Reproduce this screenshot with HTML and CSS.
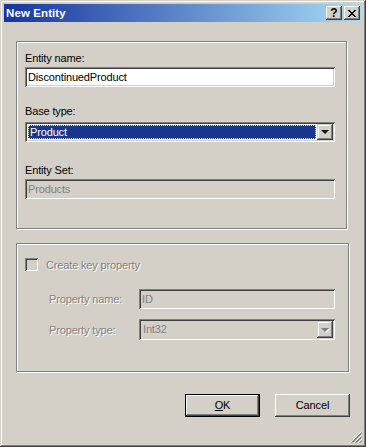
FILE: index.html
```html
<!DOCTYPE html>
<html lang="en">

<head>
    <meta charset="UTF-8">
    <title>New Entity</title>
    <link rel="stylesheet" href="styles.css">
</head>

<body>
    <div class="window">
        <div class="titlebar">
            <span class="title">New Entity</span>
            <div class="caption">
                <div class="cap-btn help">?</div>
                <div class="cap-btn">
                    <svg width="8" height="7" viewBox="0 0 8 7" shape-rendering="crispEdges">
                        <path d="M0 0h2v1h-2zM6 0h2v1h-2zM1 1h2v1h-2zM5 1h2v1h-2zM2 2h4v1h-4zM3 3h2v1h-2zM2 4h4v1h-4zM1 5h2v1h-2zM5 5h2v1h-2zM0 6h2v1h-2zM6 6h2v1h-2z" fill="#000"/>
                    </svg>
                </div>
            </div>
        </div>

        <div class="client">
            <div class="group group-entity">
                <div class="label">Entity name:</div>
                <div class="field field-name">DiscontinuedProduct</div>

                <div class="label label-base">Base type:</div>
                <div class="combo combo-base">
                    <div class="combo-value selected"><span>Product</span></div>
                    <div class="drop-btn"><i class="arrow"></i></div>
                </div>

                <div class="label label-set">Entity Set:</div>
                <div class="field field-set disabled">Products</div>
            </div>

            <div class="group group-key">
                <div class="check-row">
                    <div class="checkbox"></div>
                    <span class="dim">Create key property</span>
                </div>
                <div class="prop-row first">
                    <div class="prop-label dim">Property name:</div>
                    <div class="field prop-field disabled">ID</div>
                </div>
                <div class="prop-row">
                    <div class="prop-label dim">Property type:</div>
                    <div class="combo prop-field combo-type">
                        <div class="combo-value disabled">Int32</div>
                        <div class="drop-btn"><i class="arrow off"></i></div>
                    </div>
                </div>
            </div>

            <div class="actions">
                <div class="btn default"><u>O</u>K</div>
                <div class="btn">Cancel</div>
            </div>
        </div>

        <div class="grip">
            <svg width="12" height="12" viewBox="0 0 12 12">
                <path d="M11.5 0.5L0.5 11.5M11.5 4.5L4.5 11.5M11.5 8.5L8.5 11.5" stroke="#fff" stroke-width="1"/>
                <path d="M11.5 1.5L1.5 11.5M11.5 2.5L2.5 11.5M11.5 5.5L5.5 11.5M11.5 6.5L6.5 11.5M11.5 9.5L9.5 11.5M11.5 10.5L10.5 11.5" stroke="#808080" stroke-width="1"/>
            </svg>
        </div>
    </div>
</body>

</html>
```

FILE: styles.css
```css
* {
    padding: 0;
    margin: 0;
    box-sizing: border-box;
}

body {
    background: #d4d0c8;
    font-family: "Liberation Sans", Arial, sans-serif;
    font-size: 11px;
    letter-spacing: -0.15px;
    color: #000;
}

.window {
    position: relative;
    width: 366px;
    height: 447px;
    padding: 4px;
    background: #d4d0c8;
    box-shadow: inset -1px -1px #404040, inset 1px 1px #d4d0c8,
        inset -2px -2px #808080, inset 2px 2px #fff;
}

/* title bar */
.titlebar {
    display: flex;
    align-items: center;
    justify-content: space-between;
    height: 18px;
    padding: 0 2px;
    background: linear-gradient(to right, #15359e, #a8dcf6);
}

.title {
    color: #fff;
    font-weight: bold;
    font-size: 11.5px;
    letter-spacing: 0.1px;
    line-height: 18px;
}

.caption {
    display: flex;
    gap: 2px;
}

.cap-btn {
    display: flex;
    align-items: center;
    justify-content: center;
    width: 16px;
    height: 14px;
    background: #d4d0c8;
    box-shadow: inset -1px -1px #404040, inset 1px 1px #fff,
        inset -2px -2px #808080, inset 2px 2px #d4d0c8;
}

.cap-btn.help {
    font-weight: bold;
    font-size: 12px;
    letter-spacing: 0;
    line-height: 14px;
    padding-bottom: 1px;
}

/* client */
.client {
    padding: 19px 0 0 12px;
}

.group {
    border: 1px solid #808080;
    box-shadow: inset 1px 1px #fff, 1px 1px #fff;
}

.group-entity {
    width: 331px;
    height: 188px;
    padding: 10px 0 0 8px;
}

.group-key {
    width: 333px;
    height: 129px;
    margin-top: 14px;
    padding: 14px 0 0 8px;
}

.label {
    height: 13px;
    line-height: 13px;
}

.label-base {
    margin-top: 18px;
}

.label-set {
    margin-top: 22px;
}

.field {
    width: 310px;
    height: 20px;
    margin-top: 2px;
    padding: 0 3px;
    line-height: 20px;
    background: #fff;
    box-shadow: inset 1px 1px #808080, inset -1px -1px #fff,
        inset 2px 2px #404040, inset -2px -2px #d4d0c8;
}

.field.disabled,
.combo-value.disabled {
    background: #d4d0c8;
    color: #808080;
}

.combo {
    display: flex;
    width: 310px;
    height: 20px;
    padding: 2px;
    background: #fff;
    box-shadow: inset 1px 1px #808080, inset -1px -1px #fff,
        inset 2px 2px #404040, inset -2px -2px #d4d0c8;
}

.combo-base {
    margin-top: 4px;
}

.combo-value {
    flex: 1;
    line-height: 16px;
    padding-left: 2px;
}

.combo-value.selected {
    margin: 1px;
    padding: 0;
    background: #17368c;
    border: 1px dotted #f4f0a0;
    color: #fff;
    line-height: 12px;
}

.combo-value.selected span {
    padding-left: 1px;
}

.drop-btn {
    display: flex;
    align-items: center;
    justify-content: center;
    width: 16px;
    background: #d4d0c8;
    box-shadow: inset -1px -1px #404040, inset 1px 1px #d4d0c8,
        inset -2px -2px #808080, inset 2px 2px #fff;
}

.arrow {
    width: 0;
    height: 0;
    border-left: 4px solid transparent;
    border-right: 4px solid transparent;
    border-top: 4px solid #000;
}

.arrow.off {
    border-top-color: #808080;
    filter: drop-shadow(1px 1px 0 #fff);
}

/* key property box */
.check-row {
    display: flex;
    align-items: center;
    height: 13px;
}

.checkbox {
    width: 13px;
    height: 13px;
    margin-right: 8px;
    background: #d4d0c8;
    box-shadow: inset 1px 1px #808080, inset -1px -1px #fff,
        inset 2px 2px #404040, inset -2px -2px #d4d0c8;
}

.dim {
    color: #808080;
    text-shadow: 1px 1px 0 #fff;
}

.prop-row {
    display: flex;
    align-items: center;
    margin-top: 10px;
    padding-left: 24px;
}

.prop-row.first {
    margin-top: 18px;
}

.prop-label {
    width: 90px;
}

.prop-field {
    width: 196px;
    margin-top: 0;
}

.combo-type {
    height: 21px;
}

.combo-type .combo-value {
    line-height: 17px;
}

/* buttons */
.actions {
    display: flex;
    justify-content: flex-end;
    gap: 15px;
    margin-top: 22px;
    padding-right: 12px;
}

.btn {
    width: 75px;
    height: 23px;
    line-height: 23px;
    text-align: center;
    background: #d4d0c8;
    box-shadow: inset -1px -1px #404040, inset 1px 1px #fff,
        inset -2px -2px #808080, inset 2px 2px #d4d0c8;
}

.btn.default {
    border: 1px solid #000;
    line-height: 21px;
    box-shadow: inset -1px -1px #404040, inset 1px 1px #fff,
        inset -2px -2px #808080;
}

.grip {
    position: absolute;
    right: 4px;
    bottom: 4px;
    width: 12px;
    height: 12px;
}

.grip svg {
    display: block;
}
```
